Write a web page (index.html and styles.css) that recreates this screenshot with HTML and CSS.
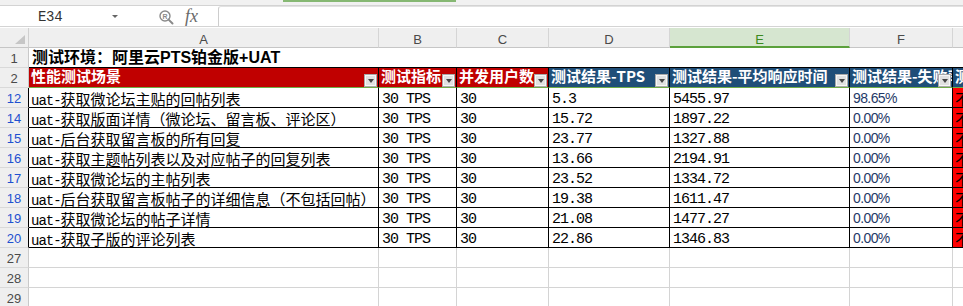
FILE: index.html
```html
<!DOCTYPE html>
<html lang="zh">
<head>
<meta charset="utf-8">
<title>Sheet</title>
<link rel="stylesheet" href="styles.css">
</head>
<body>
<div class="topbar"><div class="tab-ind"></div></div>
<div class="fbar">
  <div class="namebox"><span class="cellref">E34</span><span class="nb-arrow"></span></div>
  <div class="tools">
    <svg class="ic-find" width="15" height="15" viewBox="0 0 15 15">
      <circle cx="6" cy="6" r="5" fill="none" stroke="#8a8a8a" stroke-width="1.4"/>
      <text x="6" y="8.5" font-size="7" text-anchor="middle" fill="#8a8a8a" font-family="Liberation Sans" font-weight="bold">R</text>
      <path d="M9.6 9.6 L13.5 13.5" stroke="#8a8a8a" stroke-width="2" stroke-linecap="round"/>
    </svg>
    <span class="fx">fx</span>
  </div>
  <div class="finput"></div>
</div>
<div class="sheet">
  <div class="corner"><span class="corner-tri"></span></div>
  <div class="ch">A</div><div class="ch">B</div><div class="ch">C</div><div class="ch">D</div><div class="ch sel">E</div><div class="ch">F</div><div class="ch">G</div>

  <div class="rh">1</div>
  <div class="title">测试环境：阿里云PTS铂金版+UAT</div>

  <div class="rh">2</div>
  <div class="h red">性能测试场景<span class="dd"></span></div>
  <div class="h red">测试指标<span class="dd"></span></div>
  <div class="h red">并发用户数<span class="dd"></span></div>
  <div class="h blue">测试结果-TPS<span class="dd"></span></div>
  <div class="h blue">测试结果-平均响应时间<span class="dd"></span></div>
  <div class="h blue">测试结果-失败率<span class="dd"></span></div>
  <div class="h blue">测试结论</div>

  <div class="rh f">12</div>
  <div class="c a"><span class="lat">uat-</span>获取微论坛主贴的回帖列表</div>
  <div class="c m">30 TPS</div><div class="c m">30</div><div class="c m">5.3</div><div class="c m">5455.97</div><div class="c p">98.65%</div><div class="c g">不通过</div>

  <div class="rh f">14</div>
  <div class="c a"><span class="lat">uat-</span>获取版面详情（微论坛、留言板、评论区）</div>
  <div class="c m">30 TPS</div><div class="c m">30</div><div class="c m">15.72</div><div class="c m">1897.22</div><div class="c p">0.00%</div><div class="c g">不通过</div>

  <div class="rh f">15</div>
  <div class="c a"><span class="lat">uat-</span>后台获取留言板的所有回复</div>
  <div class="c m">30 TPS</div><div class="c m">30</div><div class="c m">23.77</div><div class="c m">1327.88</div><div class="c p">0.00%</div><div class="c g">不通过</div>

  <div class="rh f">16</div>
  <div class="c a"><span class="lat">uat-</span>获取主题帖列表以及对应帖子的回复列表</div>
  <div class="c m">30 TPS</div><div class="c m">30</div><div class="c m">13.66</div><div class="c m">2194.91</div><div class="c p">0.00%</div><div class="c g">不通过</div>

  <div class="rh f">17</div>
  <div class="c a"><span class="lat">uat-</span>获取微论坛的主帖列表</div>
  <div class="c m">30 TPS</div><div class="c m">30</div><div class="c m">23.52</div><div class="c m">1334.72</div><div class="c p">0.00%</div><div class="c g">不通过</div>

  <div class="rh f">18</div>
  <div class="c a"><span class="lat">uat-</span>后台获取留言板帖子的详细信息（不包括回帖）</div>
  <div class="c m">30 TPS</div><div class="c m">30</div><div class="c m">19.38</div><div class="c m">1611.47</div><div class="c p">0.00%</div><div class="c g">不通过</div>

  <div class="rh f">19</div>
  <div class="c a"><span class="lat">uat-</span>获取微论坛的帖子详情</div>
  <div class="c m">30 TPS</div><div class="c m">30</div><div class="c m">21.08</div><div class="c m">1477.27</div><div class="c p">0.00%</div><div class="c g">不通过</div>

  <div class="rh f">20</div>
  <div class="c a"><span class="lat">uat-</span>获取子版的评论列表</div>
  <div class="c m">30 TPS</div><div class="c m">30</div><div class="c m">22.86</div><div class="c m">1346.83</div><div class="c p">0.00%</div><div class="c g">不通过</div>

  <div class="rh">27</div>
  <div class="e"></div><div class="e"></div><div class="e"></div><div class="e"></div><div class="e"></div><div class="e"></div><div class="e"></div>
  <div class="rh">28</div>
  <div class="e"></div><div class="e"></div><div class="e"></div><div class="e"></div><div class="e"></div><div class="e"></div><div class="e"></div>
  <div class="rh">29</div>
  <div class="e"></div><div class="e"></div><div class="e"></div><div class="e"></div><div class="e"></div><div class="e"></div><div class="e"></div>
</div>
</body>
</html>
```

FILE: styles.css
```css
* { box-sizing: border-box; margin: 0; padding: 0; }
html, body { width: 963px; height: 306px; overflow: hidden; background: #fff; }
body { font-family: "Liberation Sans", "Noto Sans CJK SC", sans-serif; color: #000; }

.topbar { height: 6px; background: #f1f1f1; border-bottom: 1px solid #d3d3d3; }
.tab-ind { margin-left: 283px; width: 173px; height: 2px; background: #86b873; }

.fbar { height: 21px; border-bottom: 1px solid #d4d4d4; margin-bottom: 1px; display: flex; align-items: stretch; }
.namebox { width: 122px; display: flex; align-items: center; padding-left: 38px; }
.cellref { font-family: "Liberation Mono", monospace; font-size: 14px; color: #333; letter-spacing: -0.3px; padding-top: 1px; }
.nb-arrow { margin-left: auto; margin-right: 4px; width: 0; height: 0; border-left: 3px solid transparent; border-right: 3px solid transparent; border-top: 3px solid #666; }
.tools { width: 96px; display: flex; align-items: center; padding-left: 37px; }
.ic-find { margin-right: 11px; margin-top: 2px; }
.fx { font-family: "Liberation Serif", serif; font-style: italic; font-size: 18px; color: #6a6a6a; line-height: 1; }
.finput { flex: 1; border-left: 1px solid #cdcdcd; border-top: 1px solid #e2e2e2; border-radius: 3px 0 0 0; }

.sheet { display: grid; grid-template-columns: 29px 350px 78px 92px 121px 180px 103px 100px; grid-auto-rows: 20px; }
.sheet > div { overflow: hidden; white-space: nowrap; }

.corner { background: #efefef; border-right: 1px solid #d0d0d0; border-bottom: 1px solid #c6c6c6; display: flex; justify-content: flex-end; align-items: flex-end; padding: 0 3px 3px 0; }
.corner-tri { width: 0; height: 0; border-left: 10px solid transparent; border-bottom: 9px solid #c6c6c6; }

.ch { background: #efefef; border-right: 1px solid #d5d5d5; border-bottom: 1px solid #c6c6c6; text-align: center; font-size: 13px; line-height: 15px; padding-top: 4px; color: #4a4a4a; }
.ch.sel { background: #d6e6d0; color: #3b8a1e; border-bottom: 2px solid #5ba13b; }

.rh { background: #efefef; border-right: 1px solid #c9c9c9; border-bottom: 1px solid #d9d9d9; text-align: center; font-size: 13px; line-height: 15px; padding-top: 3px; color: #4a4a4a; }
.rh.f { color: #1d50d0; border-right-color: #000; }

.title { grid-column: 2 / -1; border-bottom: 1px solid #000; font-family: "Liberation Sans", "Noto Sans CJK SC", sans-serif; font-weight: bold; font-size: 16px; line-height: 19px; padding-left: 3px; }

.h { position: relative; color: #fff; font-family: "Noto Sans CJK SC", sans-serif; font-weight: bold; font-size: 15px; line-height: 16px; padding-left: 2px; border-right: 1px solid #000; border-bottom: 1px solid #70ad47; }
.h.red { background: #c00000; }
.h.blue { background: #1f4e78; }
.dd { position: absolute; right: 1px; bottom: 0; width: 13px; height: 13px; background: #e1e1e1; border: 1px solid #a9a9a9; box-shadow: inset 0 0 0 1px #f7f7f7; display: flex; align-items: center; justify-content: center; }
.dd::after { content: ""; width: 0; height: 0; border-left: 3.5px solid transparent; border-right: 3.5px solid transparent; border-top: 4px solid #454545; margin-top: 1px; }

.c { border-right: 1px solid #000; border-bottom: 1px solid #000; padding-left: 2px; }
.a { font-family: "Noto Sans CJK SC", sans-serif; font-size: 15px; line-height: 19px; padding-top: 1px; }
.lat { font-family: "Liberation Mono", monospace; font-size: 14px; letter-spacing: -1px; }
.m { font-family: "Liberation Mono", "Noto Sans CJK SC", monospace; font-size: 15px; letter-spacing: -1px; line-height: 19px; padding-top: 2px; padding-left: 3px; }
.p { font-family: "Liberation Sans", sans-serif; font-size: 14px; letter-spacing: -0.6px; line-height: 19px; padding-top: 1px; padding-left: 3px; color: #1f3a68; }
.g { background: #ff0000; font-family: "Noto Sans CJK SC", sans-serif; font-size: 15px; line-height: 19px; padding-top: 1px; }

.e { border-right: 1px solid #d4d4d4; border-bottom: 1px solid #d4d4d4; }
```
